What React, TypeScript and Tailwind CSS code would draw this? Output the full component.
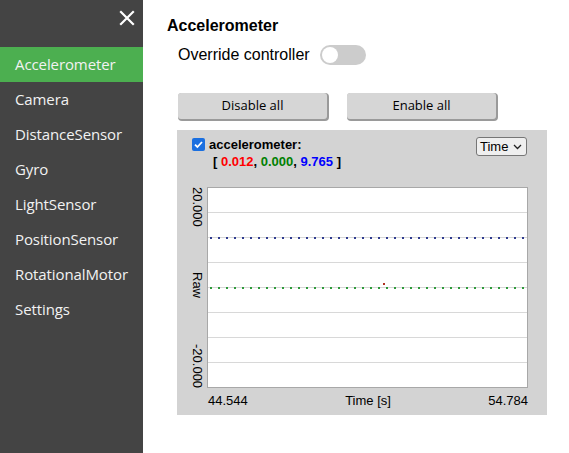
import React from "react";

const items = [
  "Accelerometer",
  "Camera",
  "DistanceSensor",
  "Gyro",
  "LightSensor",
  "PositionSensor",
  "RotationalMotor",
  "Settings",
];

function Plot() {
  const w = 321;
  const h = 201;
  const grid = [25, 50, 75, 100, 125, 150, 175];
  const dots: number[] = [];
  for (let x = 3; x < w; x += 8) dots.push(x);
  return (
    <svg width={w} height={h} className="block">
      <rect x={0.5} y={0.5} width={w - 1} height={h - 1} fill="#fff" stroke="#a8a8a8" />
      {grid.map((y) => (
        <line key={y} x1={1} x2={w - 1} y1={y + 0.5} y2={y + 0.5} stroke="#d8d8d8" />
      ))}
      {dots.map((x) => (
        <rect key={"b" + x} x={x} y={50} width={2} height={2} fill="#2f3b8f" />
      ))}
      {dots.map((x) => (
        <rect key={"g" + x} x={x} y={100} width={2} height={2} fill="#2e9a3a" />
      ))}
      <rect x={176} y={96} width={2} height={2} fill="#b03020" />
    </svg>
  );
}

export default function App() {
  return (
    <div className="flex h-[453px] w-[569px] overflow-hidden bg-white">
      <div className="flex w-[143px] shrink-0 flex-col bg-[#444444] font-['Open_Sans',sans-serif] text-[15px] text-[#f2f2f2]">
        <div className="flex h-[47px] justify-end pr-[7px] pt-[5px]">
          <svg width="16" height="16" viewBox="0 0 16 16" className="mt-[5px] mr-[1px]">
            <path d="M2 2 L14 14 M14 2 L2 14" stroke="#ffffff" strokeWidth="2.2" strokeLinecap="square" />
          </svg>
        </div>
        {items.map((it, i) => (
          <div
            key={it}
            className={
              i === 0
                ? "flex h-[35px] items-center bg-[#4caf50] pl-[15px] tracking-[-0.1px]"
                : "flex h-[35px] items-center pl-[15px] tracking-[-0.1px]"
            }
          >
            {it}
          </div>
        ))}
      </div>
      <div className="flex flex-1 flex-col pl-[24px] font-['Liberation_Sans',Arial,sans-serif] text-black">
        <div className="mt-[16px] text-[16px] font-bold leading-[20px]">Accelerometer</div>
        <div className="ml-[11px] mt-[9px] flex items-center text-[16px] leading-[20px]">
          <span>Override controller</span>
          <span className="ml-[10px] flex h-[20px] w-[46px] items-center rounded-full bg-[#cccccc] px-[2px]">
            <span className="h-[16px] w-[16px] rounded-full bg-white" />
          </span>
        </div>
        <div className="ml-[11px] mt-[28px] flex gap-[20px] font-['Open_Sans',sans-serif] text-[13px]">
          <div className="flex h-[26px] w-[149px] items-center justify-center rounded-[3px] bg-[#d6d6d6] shadow-[1px_1px_0_1px_#9a9a9a]">
            Disable all
          </div>
          <div className="flex h-[26px] w-[149px] items-center justify-center rounded-[3px] bg-[#d6d6d6] shadow-[1px_1px_0_1px_#9a9a9a]">
            Enable all
          </div>
        </div>
        <div className="ml-[10px] mt-[11px] flex h-[285px] w-[370px] flex-col bg-[#d3d3d3] pl-[9px] pt-[7px]">
          <div className="flex items-start">
            <div className="flex-1">
              <div className="flex items-center text-[13px] font-bold leading-[15px]">
                <span className="ml-[6px] mr-[4px] flex h-[13px] w-[13px] items-center justify-center rounded-[2px] bg-[#1a6fe0]">
                  <svg width="11" height="11" viewBox="0 0 11 11">
                    <path d="M2 5.6 L4.4 8 L9 3" stroke="#fff" strokeWidth="1.8" fill="none" />
                  </svg>
                </span>
                accelerometer:
              </div>
              <div className="ml-[27px] mt-[2px] text-[13px] font-bold leading-[15px]">
                [ <span className="text-[#ff0000]">0.012</span>, <span className="text-[#008000]">0.000</span>,{" "}
                <span className="text-[#0000ff]">9.765</span> ]
              </div>
            </div>
            <div className="mr-[20px] flex h-[19px] w-[51px] items-center rounded-[3px] border border-[#767676] bg-[#efefef] pl-[3px] text-[13px]">
              Time
              <svg width="9" height="6" viewBox="0 0 9 6" className="ml-[5px]">
                <path d="M1 1 L4.5 4.5 L8 1" stroke="#222" strokeWidth="1.3" fill="none" />
              </svg>
            </div>
          </div>
          <div className="mt-[18px] flex">
            <div className="flex h-[201px] w-[21px] flex-col items-center justify-between text-[13px] leading-[14px]">
              <span className="[writing-mode:vertical-rl]">20.000</span>
              <span className="[writing-mode:vertical-rl]">Raw</span>
              <span className="[writing-mode:vertical-rl]">-20.000</span>
            </div>
            <Plot />
          </div>
          <div className="ml-[22px] mt-[5px] flex w-[320px] justify-between text-[13px] leading-[15px]">
            <span>44.544</span>
            <span>Time [s]</span>
            <span>54.784</span>
          </div>
        </div>
      </div>
    </div>
  );
}
